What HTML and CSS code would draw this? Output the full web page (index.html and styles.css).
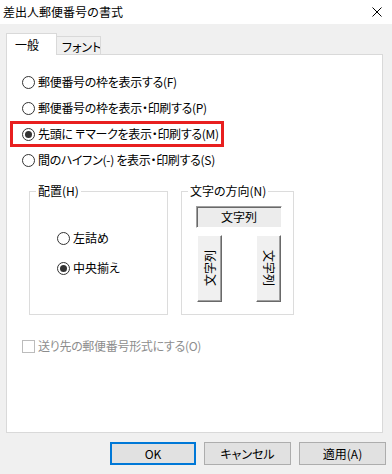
FILE: index.html
```html
<!DOCTYPE html>
<html lang="ja">
<head>
<meta charset="utf-8">
<title>差出人郵便番号の書式</title>
<link rel="stylesheet" href="styles.css">
</head>
<body>
<div class="dialog">
  <div class="titlebar">
    <span class="title">差出人郵便番号の書式</span>
    <svg class="close" width="10" height="10" viewBox="0 0 10 10"><path d="M0.5 0.5L9.5 9.5M9.5 0.5L0.5 9.5" stroke="#000" stroke-width="1" fill="none"/></svg>
  </div>
  <div class="tabs">
    <div class="tab active">一般</div>
    <div class="tab inactive">フォント</div>
  </div>
  <div class="panel">
    <div class="opt"><span class="radio"></span><span>郵便番号の枠を表示する(F)</span></div>
    <div class="opt"><span class="radio"></span><span>郵便番号の枠を表示・印刷する(P)</span></div>
    <div class="opt hl"><span class="radio on"></span><span>先頭に 〒マークを表示・印刷する(M)</span></div>
    <div class="opt"><span class="radio"></span><span>間のハイフン(-) を表示・印刷する(S)</span></div>
    <div class="groups">
      <fieldset class="grp align">
        <legend>配置(H)</legend>
        <div class="sub">
          <div class="subopt"><span class="radio"></span><span>左詰め</span></div>
          <div class="subopt"><span class="radio on"></span><span>中央揃え</span></div>
        </div>
      </fieldset>
      <fieldset class="grp dir">
        <legend>文字の方向(N)</legend>
        <div class="hbtn">文字列</div>
        <div class="vrow">
          <div class="vbtn"><span class="vtext ccw">文字列</span></div>
          <div class="vbtn"><span class="vtext">文字列</span></div>
        </div>
      </fieldset>
    </div>
    <div class="opt chk disabled"><span class="box"></span><span>送り先の郵便番号形式にする(O)</span></div>
  </div>
  <div class="buttons">
    <div class="btn default">OK</div>
    <div class="btn">キャンセル</div>
    <div class="btn">適用(A)</div>
  </div>
</div>
</body>
</html>
```
FILE: styles.css
```css
html, body {
  margin: 0;
  padding: 0;
}
body {
  background: #f0f0f0;
  font-family: "Noto Sans CJK JP", "Noto Sans", sans-serif;
  font-size: 12px;
  color: #000;
}
.dialog {
  width: 392px;
  height: 474px;
  display: flex;
  flex-direction: column;
}
.titlebar {
  height: 24px;
  box-sizing: border-box;
  background: #fff;
  display: flex;
  align-items: center;
  justify-content: space-between;
  padding: 0 10px 0 3px;
}
.title {
  line-height: 16px;
}
.close {
  display: block;
}
.tabs {
  display: flex;
  align-items: flex-end;
  margin-top: 9px;
  padding-left: 6px;
  height: 21px;
}
.tab {
  box-sizing: border-box;
  line-height: 16px;
  white-space: nowrap;
  font-feature-settings: "palt";
}
.tab.active {
  width: 51px;
  height: 22px;
  margin-bottom: -1px;
  background: #fff;
  border: 1px solid #d9d9d9;
  border-bottom: none;
  padding: 3px 0 0 8px;
  position: relative;
  z-index: 1;
}
.tab.inactive {
  width: 44px;
  height: 18px;
  background: #f0f0f0;
  border: 1px solid #d9d9d9;
  border-left: none;
  border-bottom: none;
  padding: 2px 0 0 5px;
  overflow: hidden;
}
.panel {
  box-sizing: border-box;
  margin-left: 6px;
  width: 377px;
  height: 379px;
  background: #fff;
  border: 1px solid #d9d9d9;
  padding-top: 14px;
  display: flex;
  flex-direction: column;
  align-items: flex-start;
}
.opt {
  display: flex;
  align-items: center;
  height: 26px;
  box-sizing: border-box;
  padding-left: 15px;
  line-height: 16px;
  font-feature-settings: "palt";
  letter-spacing: -0.3px;
  white-space: nowrap;
}
.opt.hl {
  margin-left: 3px;
  padding-left: 9px;
  padding-right: 2px;
  border: 3px solid #e81f1f;
}
.radio {
  flex: none;
  width: 13px;
  height: 13px;
  box-sizing: border-box;
  border: 1px solid #333;
  border-radius: 50%;
  background: #fff;
  margin-right: 3px;
  display: flex;
  align-items: center;
  justify-content: center;
}
.radio.on::after {
  content: "";
  width: 7px;
  height: 7px;
  border-radius: 50%;
  background: #333;
}
.groups {
  display: flex;
  gap: 13px;
  margin: 10px 0 0 22px;
}
.grp {
  margin: 0;
  box-sizing: border-box;
  height: 132px;
  border: 1px solid #dcdcdc;
  padding: 0 6px;
  min-width: 0;
}
.grp legend {
  padding: 0 2px;
  line-height: 16px;
  font-size: 12px;
  font-feature-settings: "palt";
}
.grp.align {
  width: 139px;
}
.grp.dir {
  width: 113px;
}
.sub {
  margin-left: 21px;
  padding-top: 24px;
}
.subopt {
  height: 30px;
  display: flex;
  align-items: center;
  line-height: 16px;
  font-feature-settings: "palt";
}
.hbtn {
  margin: 7px 0 0 8px;
  width: 86px;
  height: 22px;
  box-sizing: border-box;
  background: #ececec;
  border-style: solid;
  border-width: 1px;
  border-color: #a0a0a0 #ffffff #ffffff #a0a0a0;
  box-shadow: inset 1px 1px 0 #696969;
  display: flex;
  align-items: center;
  justify-content: center;
  line-height: 16px;
}
.vrow {
  display: flex;
  justify-content: space-between;
  width: 86px;
  box-sizing: border-box;
  padding: 0 1px;
  margin: 7px 0 0 8px;
}
.vbtn {
  width: 25px;
  height: 67px;
  box-sizing: border-box;
  background: #f0f0f0;
  border-style: solid;
  border-width: 1px;
  border-color: #ffffff #696969 #696969 #ffffff;
  box-shadow: inset -1px -1px 0 #a0a0a0;
  display: flex;
  align-items: center;
  justify-content: center;
}
.vtext {
  writing-mode: vertical-rl;
  text-orientation: sideways;
  line-height: 16px;
}
.vtext.ccw {
  transform: rotate(180deg);
}
.opt.chk {
  margin-top: 18px;
}
.box {
  flex: none;
  width: 13px;
  height: 13px;
  box-sizing: border-box;
  border: 1px solid #bcbcbc;
  background: #fff;
  margin-right: 3px;
}
.disabled {
  color: #8d8d8d;
}
.buttons {
  display: flex;
  gap: 8px;
  margin-top: 9px;
  padding-left: 110px;
}
.btn {
  width: 87px;
  height: 23px;
  box-sizing: border-box;
  border: 1px solid #adadad;
  background: #e1e1e1;
  display: flex;
  align-items: center;
  justify-content: center;
  line-height: 16px;
  font-feature-settings: "palt";
}
.btn.default {
  width: 86px;
  border: 2px solid #0078d7;
}
```
